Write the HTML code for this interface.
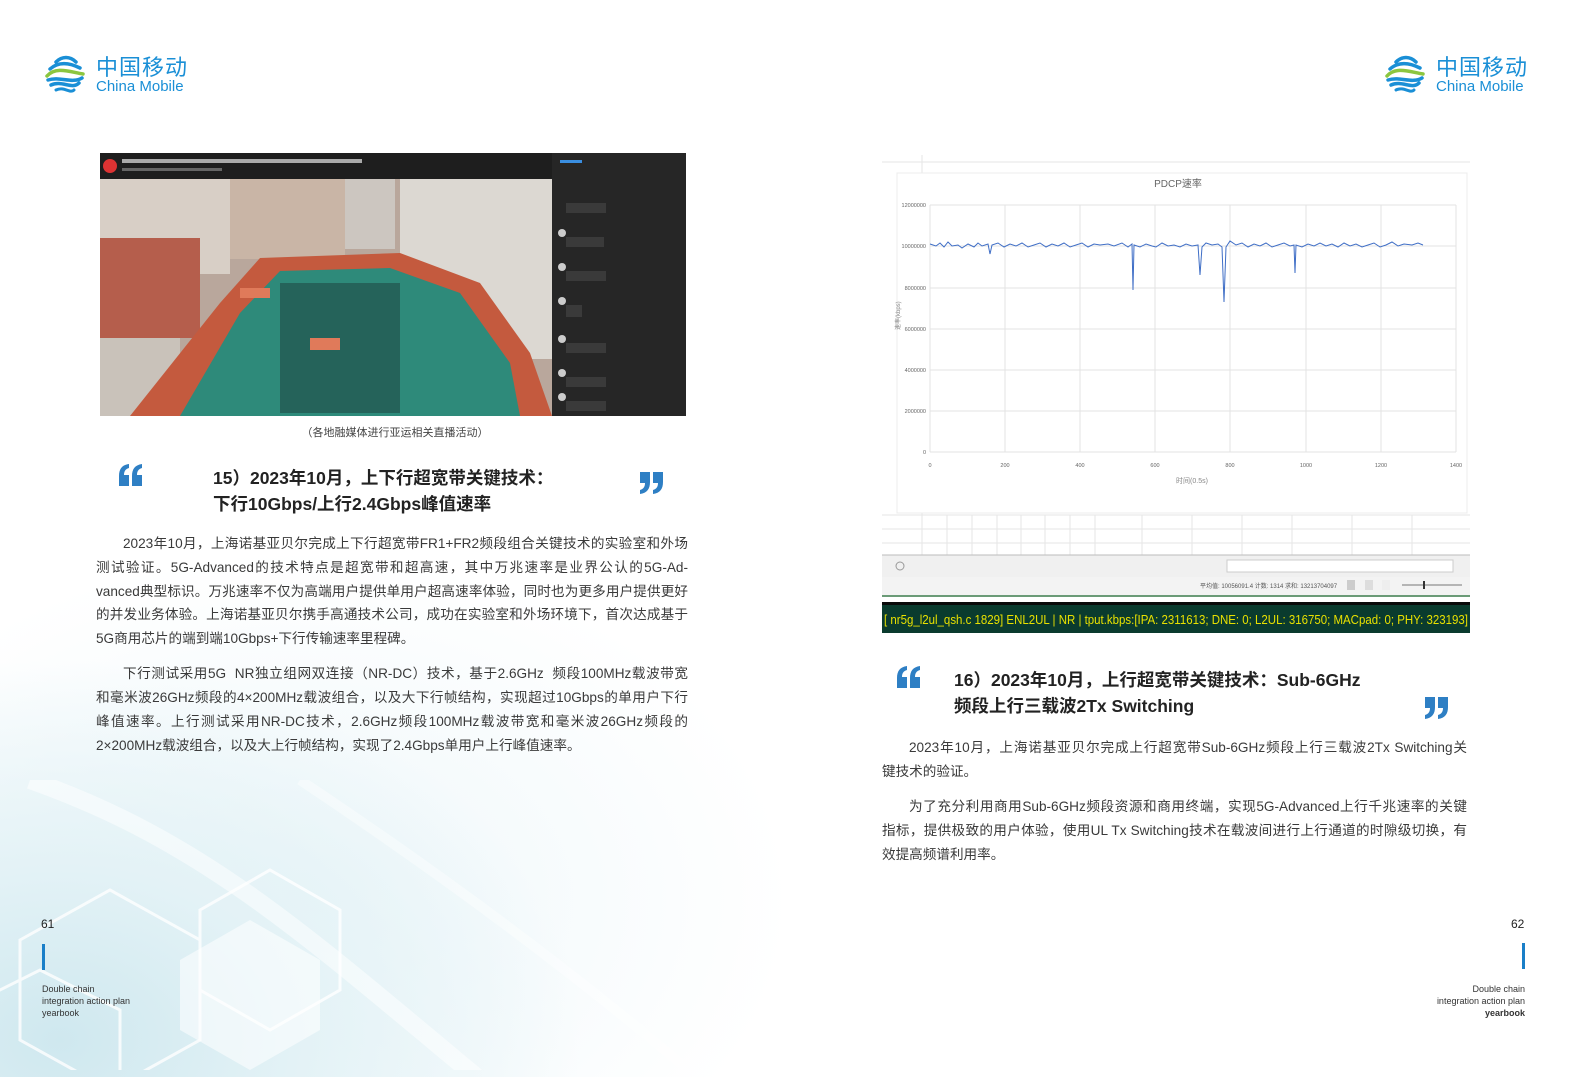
<!DOCTYPE html>
<html><head><meta charset="utf-8">
<style>
*{margin:0;padding:0;box-sizing:border-box}
html,body{width:1587px;height:1077px;overflow:hidden;background:#fff}
body{font-family:"Liberation Sans","Noto Sans CJK SC",sans-serif;color:#333}
#wrap{position:relative;width:1587px;height:1077px;overflow:hidden}
.abs{position:absolute}
.bg{position:absolute;left:0;top:0;width:870px;height:1077px;background:
radial-gradient(ellipse 520px 380px at 60px 1040px,#cfe8ef 0%,#e3f2f6 45%,rgba(255,255,255,0) 100%),
radial-gradient(ellipse 700px 500px at 300px 900px,#eef7fa 0%,rgba(255,255,255,0) 70%),#fff}
.line{position:absolute;font-size:13.6px;height:24px;line-height:24px;white-space:nowrap;text-align:justify;text-align-last:justify;color:#3a3a3a}
.last{text-align-last:left}
.ttl{position:absolute;font-size:17.5px;font-weight:bold;color:#222;white-space:nowrap;line-height:26px}
.logo-cn{position:absolute;font-size:22px;color:#1a8fd6;letter-spacing:1px;font-family:"Noto Sans CJK SC",sans-serif;line-height:24px}
.logo-en{position:absolute;font-size:15px;color:#1a8fd6;line-height:16px}
.foot{position:absolute;font-size:9px;line-height:12px;color:#333}
</style></head><body><div id="wrap">
<div class="bg"></div>
<svg class="abs" style="left:0;top:780px" width="870" height="290">
<g fill="none" stroke="#fff" stroke-width="3" opacity="0.8">
<polygon points="20,160 110,110 200,160 200,260 110,310 20,260"/>
<polygon points="200,130 270,90 340,130 340,210 270,250 200,210"/>
<polygon points="-40,230 40,190 120,230 120,320 40,360 -40,320"/>
</g>
<polygon points="180,180 250,140 320,180 320,250 250,290 180,250" fill="#fff" opacity="0.55"/>
<path d="M30,0 C200,60 300,150 480,300" stroke="#fff" stroke-width="18" fill="none" opacity="0.5"/>
<path d="M300,0 C420,80 560,180 700,300" stroke="#fff" stroke-width="10" fill="none" opacity="0.4"/>
</svg>

<svg class="abs" style="left:42px;top:52px" width="46" height="45" viewBox="0 0 46 45">
<g fill="none" stroke-linecap="round">
<path d="M14 10 C20 4 28 4 34 10" stroke="#1a8fd6" stroke-width="3.5"/>
<path d="M8 17 C18 8 30 12 38 16" stroke="#1a8fd6" stroke-width="3.5"/>
<path d="M5 24 C14 14 28 20 41 22" stroke="#8cc63f" stroke-width="3.5"/>
<path d="M6 28 C18 24 30 32 40 26" stroke="#1a8fd6" stroke-width="3.5"/>
<path d="M9 33 C20 28 30 38 37 31" stroke="#1a8fd6" stroke-width="3.5"/>
<path d="M14 38 C22 34 28 42 32 38" stroke="#1a8fd6" stroke-width="3"/>
</g></svg>
<div class="logo-cn" style="left:96px;top:54px">中国移动</div>
<div class="logo-en" style="left:96px;top:79px">China Mobile</div>
<svg class="abs" style="left:1382px;top:52px" width="46" height="45" viewBox="0 0 46 45">
<g fill="none" stroke-linecap="round">
<path d="M14 10 C20 4 28 4 34 10" stroke="#1a8fd6" stroke-width="3.5"/>
<path d="M8 17 C18 8 30 12 38 16" stroke="#1a8fd6" stroke-width="3.5"/>
<path d="M5 24 C14 14 28 20 41 22" stroke="#8cc63f" stroke-width="3.5"/>
<path d="M6 28 C18 24 30 32 40 26" stroke="#1a8fd6" stroke-width="3.5"/>
<path d="M9 33 C20 28 30 38 37 31" stroke="#1a8fd6" stroke-width="3.5"/>
<path d="M14 38 C22 34 28 42 32 38" stroke="#1a8fd6" stroke-width="3"/>
</g></svg>
<div class="logo-cn" style="left:1436px;top:54px">中国移动</div>
<div class="logo-en" style="left:1436px;top:79px">China Mobile</div>

<svg class="abs" style="left:100px;top:153px" width="586" height="263" viewBox="0 0 586 263">
<rect width="586" height="263" fill="#8a8a86"/>
<rect x="0" y="26" width="452" height="237" fill="#b9a79c"/>
<rect x="0" y="26" width="130" height="95" fill="#d8cfc6"/>
<rect x="130" y="26" width="115" height="80" fill="#c9b5a6"/>
<rect x="245" y="26" width="50" height="70" fill="#ccc6c0"/>
<rect x="300" y="26" width="152" height="180" fill="#dcd8d2"/>
<rect x="0" y="85" width="100" height="100" fill="#b55e4c"/>
<rect x="0" y="185" width="80" height="78" fill="#c9c2ba"/>
<polygon points="160,105 300,100 380,130 430,200 452,263 30,263 120,150" fill="#c45a3e"/>
<polygon points="180,118 290,115 360,140 410,210 420,263 80,263 140,160" fill="#2e8a7a"/>
<rect x="180" y="130" width="120" height="130" fill="#1f4a45" opacity="0.6"/>
<rect x="210" y="185" width="30" height="12" fill="#e07a5a"/>
<rect x="140" y="135" width="30" height="10" fill="#e07a5a"/>
<rect x="0" y="0" width="586" height="26" fill="#1e1e1e"/>
<circle cx="10" cy="13" r="7" fill="#d33"/>
<rect x="22" y="6" width="240" height="4" fill="#aaa"/>
<rect x="22" y="15" width="100" height="3" fill="#666"/>
<rect x="452" y="0" width="134" height="263" fill="#262626"/>
<rect x="460" y="7" width="22" height="3" fill="#3a8ee0"/>
<g fill="#3a3a3a"><rect x="466" y="50" width="40" height="10"/><rect x="466" y="84" width="38" height="10"/><rect x="466" y="118" width="40" height="10"/><rect x="466" y="152" width="16" height="12"/><rect x="466" y="190" width="40" height="10"/><rect x="466" y="224" width="40" height="10"/><rect x="466" y="248" width="40" height="10"/></g>
<g fill="#ccc"><circle cx="462" cy="80" r="4"/><circle cx="462" cy="114" r="4"/><circle cx="462" cy="148" r="4"/><circle cx="462" cy="186" r="4"/><circle cx="462" cy="220" r="4"/><circle cx="462" cy="244" r="4"/></g>
</svg>
<div class="abs" style="left:300px;top:424px;font-size:11px;color:#444;width:190px;text-align:center;white-space:nowrap">（各地融媒体进行亚运相关直播活动）</div>

<!-- quote icons -->
<svg class="abs" style="left:119px;top:464px" width="24" height="22" viewBox="0 0 24 22"><g fill="#2e7fc4"><path d="M0 22V12C0 5 3 1 10 0V4C6 5 5 8 5 11H10V22Z"/><path d="M13 22V12C13 5 16 1 23 0V4C19 5 18 8 18 11H23V22Z"/></g></svg>
<svg class="abs" style="left:639px;top:472px" width="24" height="22" viewBox="0 0 24 22"><g fill="#2e7fc4"><path d="M1 0H11V10C11 17 8 21 1 22V18C5 17 6 14 6 11H1Z"/><path d="M14 0H24V10C24 17 21 21 14 22V18C18 17 19 14 19 11H14Z"/></g></svg>
<div class="ttl" style="left:213px;top:465px">15）2023年10月，上下行超宽带关键技术：</div>
<div class="ttl" style="left:213px;top:491px">下行10Gbps/上行2.4Gbps峰值速率</div>

<div class="line" style="left:96px;top:532px;width:592px;padding-left:27px">2023年10月，上海诺基亚贝尔完成上下行超宽带FR1+FR2频段组合关键技术的实验室和外场</div>
<div class="line" style="left:96px;top:556px;width:592px">测试验证。5G-Advanced的技术特点是超宽带和超高速，其中万兆速率是业界公认的5G-Ad-</div>
<div class="line" style="left:96px;top:580px;width:592px">vanced典型标识。万兆速率不仅为高端用户提供单用户超高速率体验，同时也为更多用户提供更好</div>
<div class="line" style="left:96px;top:603px;width:592px">的并发业务体验。上海诺基亚贝尔携手高通技术公司，成功在实验室和外场环境下，首次达成基于</div>
<div class="line last" style="left:96px;top:627px;width:592px">5G商用芯片的端到端10Gbps+下行传输速率里程碑。</div>
<div class="line" style="left:96px;top:662px;width:592px;padding-left:27px">下行测试采用5G&nbsp; NR独立组网双连接（NR-DC）技术，基于2.6GHz&nbsp; 频段100MHz载波带宽</div>
<div class="line" style="left:96px;top:686px;width:592px">和毫米波26GHz频段的4×200MHz载波组合，以及大下行帧结构，实现超过10Gbps的单用户下行</div>
<div class="line" style="left:96px;top:710px;width:592px">峰值速率。上行测试采用NR-DC技术，2.6GHz频段100MHz载波带宽和毫米波26GHz频段的</div>
<div class="line last" style="left:96px;top:734px;width:592px">2×200MHz载波组合，以及大上行帧结构，实现了2.4Gbps单用户上行峰值速率。</div>

<div class="abs" style="left:41px;top:917px;font-size:12px;color:#222">61</div>
<div class="abs" style="left:42px;top:944px;width:3px;height:26px;background:#1a7fc8"></div>
<div class="foot" style="left:42px;top:983px">Double chain<br>integration action plan<br>yearbook</div>

<svg class="abs" style="left:882px;top:155px" width="588" height="478" viewBox="0 0 588 478">
<rect width="588" height="478" fill="#fff"/>
<g stroke="#e6e6e6" stroke-width="1">
<line x1="0" y1="7" x2="588" y2="7"/><line x1="0" y1="360" x2="588" y2="360"/><line x1="0" y1="374" x2="588" y2="374"/><line x1="0" y1="388" x2="588" y2="388"/><line x1="0" y1="402" x2="588" y2="402"/>
<line x1="40" y1="0" x2="40" y2="410"/><line x1="65" y1="360" x2="65" y2="410"/><line x1="90" y1="360" x2="90" y2="410"/><line x1="115" y1="360" x2="115" y2="410"/><line x1="139" y1="360" x2="139" y2="410"/><line x1="163" y1="360" x2="163" y2="410"/><line x1="188" y1="360" x2="188" y2="410"/><line x1="213" y1="360" x2="213" y2="410"/><line x1="260" y1="360" x2="260" y2="410"/><line x1="310" y1="360" x2="310" y2="410"/><line x1="360" y1="360" x2="360" y2="410"/><line x1="410" y1="360" x2="410" y2="410"/><line x1="470" y1="360" x2="470" y2="410"/><line x1="530" y1="360" x2="530" y2="410"/>
</g>
<rect x="15" y="18" width="570" height="340" fill="#fff" stroke="#ececec"/>
<g stroke="#e3e3e3"><line x1="48" y1="50" x2="574" y2="50"/><line x1="48" y1="91" x2="574" y2="91"/><line x1="48" y1="133" x2="574" y2="133"/><line x1="48" y1="174" x2="574" y2="174"/><line x1="48" y1="215" x2="574" y2="215"/><line x1="48" y1="256" x2="574" y2="256"/><line x1="48" y1="297" x2="574" y2="297"/>
<line x1="48" y1="50" x2="48" y2="297"/><line x1="123" y1="50" x2="123" y2="297"/><line x1="198" y1="50" x2="198" y2="297"/><line x1="273" y1="50" x2="273" y2="297"/><line x1="348" y1="50" x2="348" y2="297"/><line x1="424" y1="50" x2="424" y2="297"/><line x1="499" y1="50" x2="499" y2="297"/><line x1="574" y1="50" x2="574" y2="297"/></g>
<text x="296" y="32" font-size="10" fill="#666" text-anchor="middle" font-family="Liberation Sans,Noto Sans CJK SC,sans-serif">PDCP速率</text>
<g font-size="5.5" fill="#666" text-anchor="end" font-family="Liberation Sans,sans-serif">
<text x="44" y="52">12000000</text><text x="44" y="93">10000000</text><text x="44" y="135">8000000</text><text x="44" y="176">6000000</text><text x="44" y="217">4000000</text><text x="44" y="258">2000000</text><text x="44" y="299">0</text></g>
<g font-size="5.5" fill="#666" text-anchor="middle" font-family="Liberation Sans,sans-serif">
<text x="48" y="312">0</text><text x="123" y="312">200</text><text x="198" y="312">400</text><text x="273" y="312">600</text><text x="348" y="312">800</text><text x="424" y="312">1000</text><text x="499" y="312">1200</text><text x="574" y="312">1400</text></g>
<text x="310" y="328" font-size="7" fill="#888" text-anchor="middle" font-family="Liberation Sans,Noto Sans CJK SC,sans-serif">时间(0.5s)</text>
<text x="18" y="175" font-size="6" fill="#888" transform="rotate(-90 18 175)" font-family="Liberation Sans,Noto Sans CJK SC,sans-serif">速率(kbps)</text>
<polyline fill="none" stroke="#3f6ec6" stroke-width="1" points="48,89 54,91 58,88 62,92 66,87 70,91 76,90 80,93 86,89 92,92 96,88 100,91 106,89 108,99 110,90 116,88 122,92 128,89 134,91 140,88 146,92 152,90 158,88 164,92 170,89 176,91 182,88 188,92 194,90 200,88 206,92 212,89 218,90 226,89 232,91 240,88 246,92 250,89 251,135 252,90 258,92 264,89 270,91 274,92 280,88 286,91 292,90 298,92 304,89 310,91 316,90 318,120 320,92 324,88 330,90 336,89 340,92 342,147 344,92 348,86 354,90 360,88 366,92 372,89 378,91 384,88 390,92 396,90 402,88 408,91 412,90 413,118 414,90 420,92 426,89 432,91 438,88 444,91 450,89 456,92 462,88 468,91 474,89 480,92 486,90 492,88 498,92 504,90 510,87 516,91 522,89 530,90 536,88 541,90"/>
<rect x="0" y="400" width="588" height="22" fill="#f0f0f0"/>
<line x1="0" y1="400" x2="588" y2="400" stroke="#bbb"/>
<circle cx="18" cy="411" r="4" fill="none" stroke="#999"/>
<rect x="345" y="405" width="226" height="12" fill="#fff" stroke="#ccc"/>
<rect x="0" y="422" width="588" height="18" fill="#f3f3f3"/>
<text x="318" y="433" font-size="6" fill="#555" font-family="Liberation Sans,Noto Sans CJK SC,sans-serif">平均值: 10056091.4   计数: 1314   求和: 13213704097</text>
<rect x="465" y="425" width="8" height="10" fill="#ccc"/><rect x="483" y="425" width="8" height="10" fill="#ddd"/><rect x="500" y="425" width="8" height="10" fill="#eee"/>
<line x1="520" y1="430" x2="580" y2="430" stroke="#777"/><rect x="541" y="426" width="2" height="8" fill="#333"/>
<line x1="0" y1="441" x2="588" y2="441" stroke="#3a7a4a" stroke-width="1.5"/>
<rect x="0" y="447" width="588" height="31" fill="#0a3b2e"/>
<rect x="0" y="447" width="588" height="3" fill="#0a0a0a"/>
<text x="2" y="469" font-size="13" fill="#e8e000" font-family="Liberation Sans,sans-serif" textLength="584" lengthAdjust="spacingAndGlyphs">[   nr5g_l2ul_qsh.c   1829] ENL2UL   | NR | tput.kbps:[IPA: 2311613; DNE: 0; L2UL: 316750; MACpad: 0; PHY: 323193]</text>
</svg>

<svg class="abs" style="left:897px;top:666px" width="24" height="22" viewBox="0 0 24 22"><g fill="#2e7fc4"><path d="M0 22V12C0 5 3 1 10 0V4C6 5 5 8 5 11H10V22Z"/><path d="M13 22V12C13 5 16 1 23 0V4C19 5 18 8 18 11H23V22Z"/></g></svg>
<svg class="abs" style="left:1424px;top:697px" width="24" height="22" viewBox="0 0 24 22"><g fill="#2e7fc4"><path d="M1 0H11V10C11 17 8 21 1 22V18C5 17 6 14 6 11H1Z"/><path d="M14 0H24V10C24 17 21 21 14 22V18C18 17 19 14 19 11H14Z"/></g></svg>
<div class="ttl" style="left:954px;top:667px">16）2023年10月，上行超宽带关键技术：Sub-6GHz</div>
<div class="ttl" style="left:954px;top:693px">频段上行三载波2Tx Switching</div>

<div class="line" style="left:882px;top:736px;width:585px;padding-left:27px">2023年10月，上海诺基亚贝尔完成上行超宽带Sub-6GHz频段上行三载波2Tx Switching关</div>
<div class="line last" style="left:882px;top:760px;width:585px">键技术的验证。</div>
<div class="line" style="left:882px;top:795px;width:585px;padding-left:27px">为了充分利用商用Sub-6GHz频段资源和商用终端，实现5G-Advanced上行千兆速率的关键</div>
<div class="line" style="left:882px;top:819px;width:585px">指标，提供极致的用户体验，使用UL Tx Switching技术在载波间进行上行通道的时隙级切换，有</div>
<div class="line last" style="left:882px;top:843px;width:585px">效提高频谱利用率。</div>

<div class="abs" style="left:1511px;top:917px;font-size:12px;color:#222">62</div>
<div class="abs" style="left:1522px;top:943px;width:3px;height:26px;background:#1a7fc8"></div>
<div class="foot" style="left:1400px;width:125px;top:983px;text-align:right">Double chain<br>integration action plan<br><b>yearbook</b></div>
</div></body></html>
